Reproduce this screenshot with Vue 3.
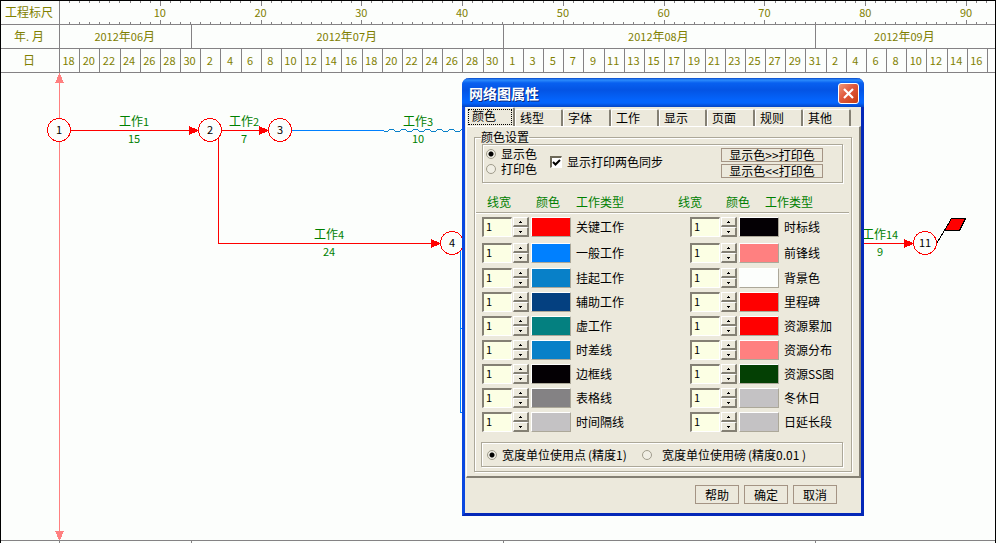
<script setup>
import { ref } from 'vue'

const range = (from, to) => {
  const out = []
  for (let n = from; n <= to; n += 2) out.push(n)
  return out
}
const days = [...range(18, 30), ...range(2, 30), ...range(1, 31), ...range(2, 16)]
const months = [
  { month: '06', grow: 13 },
  { month: '07', grow: 31 },
  { month: '08', grow: 31 },
  { month: '09', grow: 17.8 },
]

const nodes = [
  { id: 1, x: 59, y: 130 },
  { id: 2, x: 210, y: 130 },
  { id: 3, x: 280, y: 130 },
  { id: 4, x: 452, y: 243 },
  { id: 11, x: 925, y: 243 },
]
const tasks = [
  { name: '工作', no: 1, days: 15, x: 134, y: 130 },
  { name: '工作', no: 2, days: 7, x: 244, y: 130 },
  { name: '工作', no: 3, days: 10, x: 418, y: 130 },
  { name: '工作', no: 4, days: 24, x: 329, y: 243 },
  { name: '工作', no: 14, days: 9, x: 880, y: 243 },
]

const tabs = ['颜色', '线型', '字体', '工作', '显示', '页面', '规则', '其他']
const activeTab = ref('颜色')
const target = ref('display')
const sync = ref(true)
const unit = ref('point')
const items = ref([
  { name: '关键工作', color: '#ff0000', width: 1 },
  { name: '一般工作', color: '#0080ff', width: 1 },
  { name: '挂起工作', color: '#0880c8', width: 1 },
  { name: '辅助工作', color: '#044080', width: 1 },
  { name: '虚工作', color: '#048080', width: 1 },
  { name: '时差线', color: '#0880c8', width: 1 },
  { name: '边框线', color: '#040004', width: 1 },
  { name: '表格线', color: '#848284', width: 1 },
  { name: '时间隔线', color: '#c4c2c4', width: 1 },
  { name: '时标线', color: '#040004', width: 1 },
  { name: '前锋线', color: '#ff8080', width: 1 },
  { name: '背景色', color: '#fcfefc', width: 1 },
  { name: '里程碑', color: '#ff0000', width: 1 },
  { name: '资源累加', color: '#ff0000', width: 1 },
  { name: '资源分布', color: '#ff8080', width: 1 },
  { name: '资源SS图', color: '#044004', width: 1 },
  { name: '冬休日', color: '#c4c2c4', width: 1 },
  { name: '日延长段', color: '#c4c2c4', width: 1 },
])
const step = (item, by) => {
  item.width = Math.max(1, Number(item.width) + by)
}
</script>

<template>
  <main class="sheet">
    <header class="scale">
      <div class="row ruler">
        <div class="head">工程标尺</div>
        <div class="track">
          <span v-for="n in 92" :key="n" class="tick" :class="{ major: n % 10 === 0 }">
            <span v-if="n % 10 === 0" class="mark">{{ n }}</span>
          </span>
          <span class="rest"></span>
        </div>
      </div>
      <div class="row">
        <div class="head">年<span class="num dot">.</span>月</div>
        <div class="track">
          <div v-for="m in months" :key="m.month" class="cell" :style="{ flexGrow: m.grow }">
            <span class="num">2012</span>年<span class="num">{{ m.month }}</span>月
          </div>
        </div>
      </div>
      <div class="row">
        <div class="head">日</div>
        <div class="track">
          <div v-for="(d, i) in days" :key="i" class="cell day num">{{ d }}</div>
          <div class="rest"></div>
        </div>
      </div>
    </header>

    <section class="canvas">
      <svg class="network" width="100%" height="100%">
        <g transform="translate(-1 -73)" fill="none" shape-rendering="crispEdges">
          <path d="M59.5 75V540" stroke="#ff8080" />
          <path d="M59.5 73L64 83H55zM59.5 541L55 531H64z" fill="#ff8080" />
          <g stroke="#ff0000">
            <path d="M71 130.5H198M221 130.5H268M218.500 138V243.500H440M864 243.500H913" />
          </g>
          <path
            d="M189 126L199 130.500L189 135zM269 126L279 130.500L269 135zM431 239L441 243.500L431 248zM904 239L914 243.500L904 248z"
            fill="#ff0000"
          />
          <path d="M259 126L269 130.500L259 135z" fill="#ff0000" />
          <path d="M291 130.500H384M460.500 250V412.500H464M460 328.500H464" stroke="#0080ff" />
          <path
            d="M384 131.500h3l3-2h3l3 2h3l3-2h3l3 2h3l3-2h3l3 2h3l3-2h3l3 2h3l3-2h3l3 2h3l3-2h3l3 2h3l3-2h3"
            stroke="#0880c8"
          />
          <path d="M937 243L951.500 218.500" stroke="#000" />
          <path d="M951.500 218.500H965.500L959.500 230.500H944.500z" fill="#ff0000" stroke="#000" />
          <g v-for="n in nodes" :key="n.id">
            <circle :cx="n.x" :cy="n.y" r="11.500" fill="#fcfefc" stroke="#ff0000" />
            <text class="node" :x="n.x" :y="n.y + 4">{{ n.id }}</text>
          </g>
          <g v-for="t in tasks" :key="t.no">
            <text class="task" :x="t.x" :y="t.y - 4">{{ t.name }}<tspan class="small">{{ t.no }}</tspan></text>
            <text class="task small" :x="t.x" :y="t.y + 13">{{ t.days }}</text>
          </g>
        </g>
      </svg>
    </section>

    <footer class="foot">
      <div class="head"></div>
      <div class="track">
        <div v-for="m in months" :key="m.month" class="cell" :style="{ flexGrow: m.grow }"></div>
      </div>
    </footer>

    <div class="dialog" role="dialog" aria-labelledby="dlg-title">
      <div class="titlebar">
        <h1 id="dlg-title">网络图属性</h1>
        <button class="close" type="button" aria-label="关闭">
          <svg width="13" height="13" viewBox="0 0 13 13">
            <path d="M2 2L11 11M11 2L2 11" stroke="#fff" stroke-width="2.200" />
          </svg>
        </button>
      </div>

      <div class="tabs" role="tablist">
        <button
          v-for="t in tabs"
          :key="t"
          class="tab"
          :class="{ active: t === activeTab }"
          type="button"
          role="tab"
          :aria-selected="t === activeTab"
          @click="activeTab = t"
        ><span>{{ t }}</span></button>
      </div>

      <div class="page">
        <fieldset class="group">
          <legend>颜色设置</legend>
          <div class="etched options">
            <div class="radios">
              <label><input v-model="target" type="radio" name="target" value="display" />显示色</label>
              <label><input v-model="target" type="radio" name="target" value="print" />打印色</label>
            </div>
            <label class="check"><input v-model="sync" type="checkbox" />显示打印两色同步</label>
            <div class="copies">
              <button type="button">显示色&gt;&gt;打印色</button>
              <button type="button">显示色&lt;&lt;打印色</button>
            </div>
          </div>

          <div class="headings">
            <span>线宽</span><span>颜色</span><span>工作类型</span>
            <span>线宽</span><span>颜色</span><span>工作类型</span>
          </div>

          <div class="items">
            <div v-for="(item, i) in items" :key="item.name" class="item">
              <input :id="'w' + i" v-model="item.width" class="width" type="text" />
              <span class="spin">
                <button type="button" aria-label="增加" @click="step(item, 1)">
                  <svg width="3" height="2"><path d="M1 0h1v1h1v1H0V1h1z" /></svg>
                </button>
                <button type="button" aria-label="减少" @click="step(item, -1)">
                  <svg width="3" height="2"><path d="M0 0h3v1H2v1H1V1H0z" /></svg>
                </button>
              </span>
              <button
                class="swatch"
                type="button"
                :aria-label="item.name"
                :style="{ backgroundColor: item.color }"
              ></button>
              <label :for="'w' + i">{{ item.name }}</label>
            </div>
          </div>

          <div class="etched units">
            <label><input v-model="unit" type="radio" name="unit" value="point" />宽度单位使用点<span>(精度1)</span></label>
            <label><input v-model="unit" type="radio" name="unit" value="pound" />宽度单位使用磅<span>(精度0.01 )</span></label>
          </div>
        </fieldset>
      </div>

      <div class="actions">
        <button type="button">帮助</button>
        <button type="button">确定</button>
        <button type="button">取消</button>
      </div>
    </div>
  </main>
</template>

<style>
body {
  background: #fcfefc;
}
</style>

<style scoped>
.sheet,
.sheet * {
  box-sizing: border-box;
}
.sheet {
  position: relative;
  display: flex;
  flex-direction: column;
  height: 100vh;
  min-height: 520px;
  margin-right: 4px;
  overflow: hidden;
  border: 1px solid #000;
  border-bottom: 0;
  background: #fcfefc;
  font: 12px/12px "Noto Sans CJK SC", sans-serif;
  color: #000;
}
button,
input {
  margin: 0;
  padding: 0;
  font: inherit;
  color: inherit;
}
.num,
.small {
  font-size: 11px;
}

.scale {
  color: #808000;
}
.row {
  display: flex;
  height: 24px;
  border-bottom: 1px solid #848284;
}
.head {
  display: flex;
  flex: none;
  align-items: center;
  justify-content: center;
  width: 59px;
  padding: 0 2px 2px 0;
  border-right: 1px solid #848284;
}
.dot {
  width: 6px;
}
.track {
  display: flex;
  flex: 1;
  min-width: 0;
}
.cell {
  display: flex;
  flex: 1 1 0;
  align-items: center;
  justify-content: center;
  min-width: 0;
  padding: 0 2px 2px 0;
  border-right: 1px solid #848284;
}
.cell:last-child {
  border-right: 0;
}
.cell.day {
  flex-grow: 2;
}
.rest {
  flex: 0.8 1 0;
}
.tick {
  display: flex;
  flex: 1 1 0;
  flex-direction: column;
  align-items: flex-end;
  justify-content: space-between;
  min-width: 0;
}
.tick::before,
.tick::after {
  content: "";
  width: 1px;
  height: 2px;
  background: #848284;
}
.tick.major::before,
.tick.major::after {
  height: 5px;
}
.mark {
  display: flex;
  justify-content: center;
  width: 2px;
  padding-bottom: 2px;
  font-size: 11px;
}

.canvas {
  flex: 1;
  min-height: 0;
  overflow: hidden;
}
.network {
  display: block;
}
.network text {
  font-size: 12px;
  text-anchor: middle;
}
.network .node {
  font-size: 11px;
  fill: #000;
}
.network .task {
  fill: #008000;
}
.network .small {
  font-size: 11px;
}
.foot {
  display: flex;
  flex: none;
  height: 3px;
  border-top: 1px solid #848284;
}

.dialog {
  position: absolute;
  top: 77px;
  left: 461px;
  width: 402px;
  border: solid #0a48e0;
  border-width: 0 3px 3px;
  border-right-color: #0428b8;
  border-bottom-color: #0428b8;
  border-radius: 7px 7px 0 0;
  background: #ece9dc;
}
.titlebar {
  display: flex;
  align-items: center;
  justify-content: space-between;
  height: 29px;
  margin: 0 -3px;
  padding: 1px 5px 0 7px;
  border-radius: 7px 7px 0 0;
  background: linear-gradient(#0848c8 0, #2c8cfc 2px, #0860f0 5px, #0454e4 12px, #0464fc 22px, #0464fc 25px, #0444c4 29px);
}
.titlebar h1 {
  margin: 0;
  font-size: 14px;
  line-height: 20px;
  color: #fff;
  text-shadow: 1px 1px #0a2a80;
}
.close {
  display: flex;
  align-items: center;
  justify-content: center;
  width: 21px;
  height: 21px;
  border: 1px solid #fff;
  border-radius: 3px;
  background: linear-gradient(135deg, #f09878, #e0583c 45%, #c83c10);
}

.tabs {
  display: flex;
  align-items: flex-end;
  height: 19px;
  padding-left: 1px;
}
.tab {
  width: 48px;
  height: 17px;
  padding-left: 4px;
  border: solid #fff;
  border-width: 1px 2px 0 1px;
  border-right-color: #848074;
  border-radius: 2px 2px 0 0;
  background: #ece9dc;
  text-align: left;
}
.tab.active {
  width: 49px;
  height: 19px;
  padding: 1px 1px 1px 1px;
}
.tab.active span {
  display: block;
  height: 16px;
  padding-left: 3px;
  border: 1px dotted #000;
  line-height: 12px;
}
.page {
  margin-left: 1px;
  padding: 4px 7px 4px;
  border: solid #fff;
  border-width: 1px 2px 2px 1px;
  border-right-color: #848074;
  border-bottom-color: #848074;
}
.group {
  min-width: 0;
  margin: 0;
  padding: 0 8px 4px 6px;
  border: 1px solid #aca899;
  box-shadow: 1px 1px #fff, inset 1px 1px #fff;
}
.group legend {
  padding: 0;
  line-height: 12px;
}
.etched {
  border: 1px solid #aca899;
  box-shadow: 1px 1px #fff, inset 1px 1px #fff;
}
label {
  display: flex;
  align-items: center;
  white-space: nowrap;
}
input[type='radio'] {
  width: 10px;
  height: 10px;
  margin-right: 5px;
  border: 1px solid #a09c8c;
  border-radius: 50%;
  background: #f0eee4;
  appearance: none;
}
input[type='radio']:checked {
  background: radial-gradient(circle, #000 0 2px, #f0eee4 3px);
}
.options {
  display: flex;
  align-items: flex-start;
  height: 39px;
  margin: 1px 0 0 1px;
  padding: 2px 19px 0 3px;
}
.radios {
  width: 64px;
}
.radios label {
  height: 15px;
  padding-bottom: 1px;
}
.check {
  flex: 1;
  height: 29px;
}
input[type='checkbox'] {
  width: 12px;
  height: 12px;
  margin-right: 5px;
  border: 1px solid #fff;
  border-top: 2px solid #6c6858;
  border-left: 2px solid #6c6858;
  background: #fff;
  appearance: none;
}
input[type='checkbox']:checked {
  background: #fff url("data:image/svg+xml,%3Csvg xmlns='http://www.w3.org/2000/svg' viewBox='0 0 9 9'%3E%3Cpath d='M1 4l2.500 2.500L8 2' fill='none' stroke='%23000' stroke-width='2'/%3E%3C/svg%3E") center / 9px 9px no-repeat;
}
.copies {
  display: grid;
  gap: 2px;
  width: 102px;
  padding-top: 1px;
}
.copies button,
.actions button {
  border: 1px solid #a49484;
  background: #ece9dc;
}
.copies button {
  height: 14px;
  line-height: 12px;
}
.headings {
  display: grid;
  grid-template-columns: 49px 40px 102px 48px 39px 1fr;
  height: 30px;
  margin: 0 -6px 0 -5px;
  padding: 11px 0 0 11px;
  border-bottom: 1px solid #aca899;
  box-shadow: 0 1px #fff;
  line-height: 16px;
  color: #008000;
  white-space: nowrap;
}
.items {
  display: grid;
  grid-template-rows: 26px 25px repeat(7, 24px);
  grid-template-columns: 208px 1fr;
  grid-auto-flow: column;
  padding: 4px 0 0 1px;
}
.item {
  display: flex;
  align-items: flex-start;
}
.width {
  width: 30px;
  height: 20px;
  margin-right: 1px;
  padding: 0 0 3px 2px;
  border: 2px solid #848074;
  border-right: 1px solid #fff;
  border-bottom: 1px solid #fff;
  background: #fcffe4;
  font-size: 11px;
  line-height: 14px;
}
.spin {
  display: grid;
  width: 16px;
  height: 20px;
  margin-right: 2px;
}
.spin button {
  display: flex;
  align-items: center;
  justify-content: center;
  height: 10px;
  border: solid #fff;
  border-width: 1px 2px 2px 1px;
  border-right-color: #848074;
  border-bottom-color: #848074;
  background: #ece9dc;
}
.swatch {
  width: 40px;
  height: 20px;
  margin-right: 5px;
  border: 1px solid #fff;
  border-right-color: #aca899;
  border-bottom-color: #aca899;
}
.item label {
  height: 20px;
}
.units {
  display: flex;
  align-items: center;
  height: 25px;
  margin-top: 6px;
  padding-left: 5px;
}
.units label {
  flex: 0 0 155px;
}
.units label + label {
  flex: 1;
}
.units label + label input {
  margin-right: 10px;
}
.units span {
  margin-left: 2px;
  white-space: pre;
}
.actions {
  display: flex;
  gap: 5px;
  justify-content: flex-end;
  padding: 7px 24px 9px 0;
}
.actions button {
  width: 44px;
  height: 19px;
}
</style>
